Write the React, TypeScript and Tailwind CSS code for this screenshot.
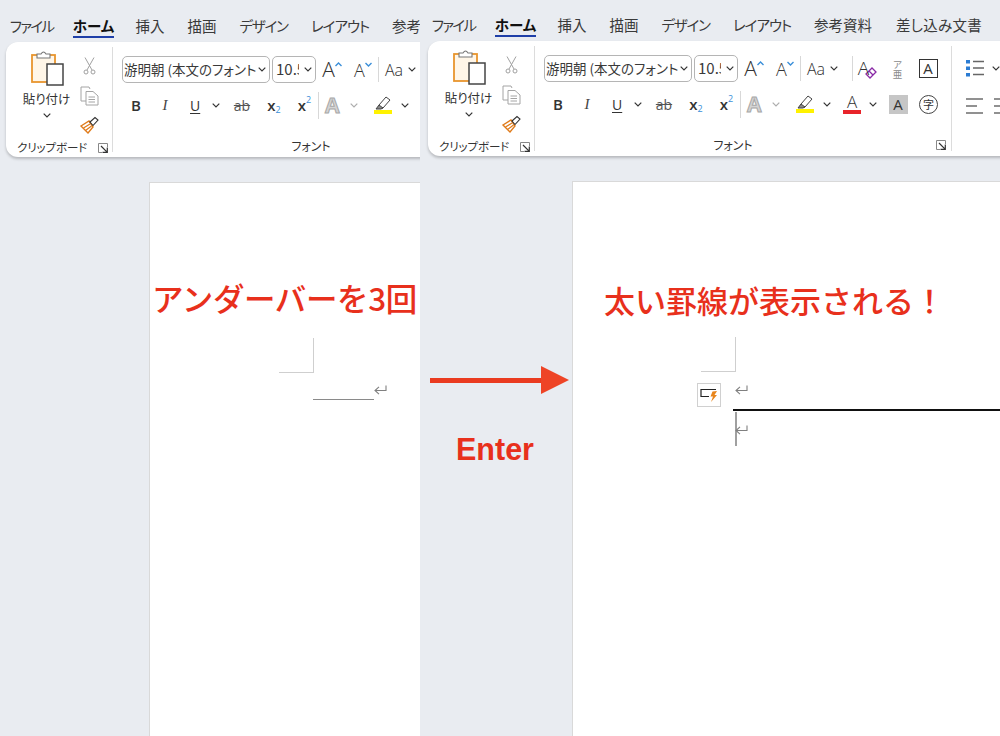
import React from "react";

const Chevron = ({ className = "" }: { className?: string }) => (
  <svg width="8" height="5" viewBox="0 0 8 5" className={`shrink-0 ${className}`} fill="none" stroke="#333" strokeWidth="1.2">
    <path d="M0.7 0.7 L4 4 L7.3 0.7" />
  </svg>
);

const Launcher = () => (
  <svg width="10" height="10" viewBox="0 0 10 10" fill="none" stroke="#333" strokeWidth="1">
    <path d="M9.5 4 V0.5 H0.5 V9.5 H4" stroke="#888" />
    <path d="M3 3 L8.6 8.6 M9.3 4.5 V9.3 H4.5" strokeWidth="1.2" />
  </svg>
);

const Paste = () => (
  <svg width="34" height="36" viewBox="0 0 34 36" fill="none">
    <rect x="1" y="5" width="23" height="27" fill="#fff6e8" stroke="#e8952e" strokeWidth="1.8" />
    <path d="M6 8 V4 H10 Q12.5 0 15 4 H19 V8 Z" fill="#fff" stroke="#777" strokeWidth="1.1" />
    <rect x="16" y="14" width="16" height="21" fill="#fff" stroke="#444" strokeWidth="1.5" />
  </svg>
);

const Scissors = () => (
  <svg width="13" height="18" viewBox="0 0 13 18" fill="none" stroke="#a0a0a0" strokeWidth="1">
    <path d="M2 0.5 L9 13 M11 0.5 L4 13" />
    <circle cx="3" cy="15" r="2" />
    <circle cx="10" cy="15" r="2" />
  </svg>
);

const Copy = () => (
  <svg width="19" height="20" viewBox="0 0 19 20" fill="none" stroke="#a4a4a4" strokeWidth="1">
    <path d="M9 15 H1 V1 H9 L10 3" />
    <path d="M6 5.5 H13 L18 10 V19 H6 Z" fill="#fff" />
    <path d="M8.5 11 H15 M8.5 13.5 H15 M8.5 16 H15" />
  </svg>
);

const Painter = () => (
  <svg width="19" height="18" viewBox="0 0 19 18" fill="none">
    <path d="M1 10 L9 5 L13 11 L8 17 Z" fill="#fff" stroke="#e07b1a" strokeWidth="1.4" />
    <path d="M3.5 12 L10 8 M5.5 14.5 L11.5 10" stroke="#e07b1a" strokeWidth="1.2" />
    <path d="M10 6 L15 1.5 L18 4 L13 9.5 Z" fill="#fff" stroke="#333" strokeWidth="1.1" />
  </svg>
);

const Caret = ({ down = false }: { down?: boolean }) => (
  <svg width="7" height="5" viewBox="0 0 7 5" fill="none" stroke="#3b8fd9" strokeWidth="1.4">
    <path d={down ? "M0.5 1 L3.5 4 L6.5 1" : "M0.5 4 L3.5 1 L6.5 4"} />
  </svg>
);

const Eraser = () => (
  <svg width="12" height="12" viewBox="0 0 12 12" fill="none" stroke="#8a2aa6" strokeWidth="1.3">
    <path d="M1 7 L7 1 L11 5 L5 11 Z" />
    <path d="M4 4 L8 8" />
  </svg>
);

const Pen = () => (
  <svg width="17" height="14" viewBox="0 0 17 14" fill="none" stroke="#444" strokeWidth="1">
    <path d="M4 9 L11 1 L15 4 L8 12 H4 Z" fill="#fff" />
    <path d="M1 13 L4 9 L8 12 L6 13 Z" fill="#888" />
  </svg>
);

const ListIcon = () => (
  <svg width="18" height="18" viewBox="0 0 18 18">
    <rect x="0" y="1" width="4" height="3.5" fill="#2b7cd3" />
    <rect x="0" y="7.5" width="4" height="3.5" fill="#2b7cd3" />
    <rect x="0" y="14" width="4" height="3.5" fill="#2b7cd3" />
    <path d="M7 2.5 H18 M7 9 H18 M7 15.5 H18" stroke="#666" strokeWidth="1.3" />
  </svg>
);

const AlignIcon = () => (
  <svg width="18" height="16" viewBox="0 0 18 16" stroke="#6e6e6e" strokeWidth="1.3">
    <path d="M0 1 H17 M0 8 H11 M0 15 H17" />
  </svg>
);

const ReturnMark = () => (
  <svg width="13" height="11" viewBox="0 0 13 11" fill="none" stroke="#808080" strokeWidth="1.1">
    <path d="M12 0.5 V5.5 H1 M5 1.8 L1 5.5 L5 9.2" />
  </svg>
);

const AutoFormat = () => (
  <svg width="19" height="15" viewBox="0 0 19 15" fill="none">
    <path d="M16 1.5 H1 V8.5 H9" stroke="#222" strokeWidth="1.2" />
    <path d="M17 3 L12.5 3.5 L10.5 8.5 H13 L11 14 L17 7 H14.5 Z" fill="#e8851c" />
  </svg>
);

const Cell = ({ className = "", children }: { className?: string; children: React.ReactNode }) => (
  <div className={`flex items-center shrink-0 h-full ${className}`}>{children}</div>
);

const Select = ({ className, textClass, label }: { className: string; textClass: string; label: string }) => (
  <div className={`flex items-center h-[27px] shrink-0 border border-[#b5b5b5] rounded-[5px] bg-white pl-px pr-[3px] gap-[1px] ${className}`}>
    <span className={`flex-1 min-w-0 overflow-hidden whitespace-nowrap text-[#3a3a3a] [font-feature-settings:'palt'] ${textClass}`}>{label}</span>
    <Chevron />
  </div>
);

const UiA = "font-['Open_Sans',sans-serif] text-[#333]";

const Ribbon = () => (
  <div className="flex h-[115px] w-[1000px] bg-white rounded-l-[12px] shadow-[0_2px_3px_rgba(0,0,0,0.22)] shrink-0">
    {/* clipboard */}
    <div className="flex flex-col w-[106px] shrink-0">
      <div className="flex flex-1 pl-[12px] pt-[9px]">
        <div className="flex flex-col items-center w-[57px]">
          <span className="ml-[3px] -mt-px"><Paste /></span>
          <span className="mt-[4px] text-[12.5px] leading-[18px] text-[#333] whitespace-nowrap [font-feature-settings:'palt']">貼り付け</span>
          <Chevron className="mt-[5px]" />
        </div>
        <div className="flex flex-col items-center w-[28px]">
          <div className="h-[30px] flex items-center"><Scissors /></div>
          <div className="h-[30px] flex items-center"><Copy /></div>
          <div className="h-[28px] flex items-center"><Painter /></div>
        </div>
      </div>
      <div className="flex items-center h-[22px] mb-[2px] pl-[11px]">
        <span className="w-[81px] text-[11.5px] text-[#333] whitespace-nowrap tracking-[-0.1px] [font-feature-settings:'palt']">クリップボード</span>
        <Launcher />
      </div>
    </div>
    <div className="w-px bg-[#dcdcdc] my-[5px] shrink-0" />
    {/* font */}
    <div className="flex flex-col w-[416px] shrink-0">
      <div className="flex-1 pl-[9px] pt-[14px]">
        <div className="flex h-[27px] items-center">
          <Select className="w-[148px]" textClass="text-[13.5px]" label="游明朝 (本文のフォント" />
          <Select className="w-[44px] ml-[2px]" textClass="text-[15px] pl-[2px] mr-[4px]" label="10.5" />
          <Cell className="w-[32px] justify-center">
            <span className={`${UiA} text-[21px] font-light leading-none`}>A</span>
            <span className="mb-[10px]"><Caret /></span>
          </Cell>
          <Cell className="w-[30px] justify-center">
            <span className={`${UiA} text-[18px] font-light leading-none`}>A</span>
            <span className="mb-[10px]"><Caret down /></span>
          </Cell>
          <div className="w-px h-[25px] bg-[#d8d8d8] shrink-0" />
          <Cell className="w-[51px] gap-[5px] pl-[6px]">
            <span className={`${UiA} text-[16px] font-light leading-none`}>Aa</span>
            <Chevron />
          </Cell>
          <div className="w-px h-[25px] bg-[#d8d8d8] shrink-0" />
          <Cell className="w-[29px] justify-center">
            <span className={`${UiA} relative text-[19px] font-light leading-none`}>A</span>
            <span className="mt-[9px] -ml-[4px]"><Eraser /></span>
          </Cell>
          <Cell className="w-[31px] flex-col justify-center">
            <span className="text-[9.5px] leading-[10px] text-[#8a8a8a]">ア</span>
            <span className="text-[9.5px] leading-[10px] text-[#8a8a8a]">亜</span>
          </Cell>
          <Cell className="w-[30px] justify-center">
            <span className={`${UiA} flex items-center justify-center w-[19px] h-[19px] border-[1.5px] border-[#333] text-[15px] leading-none`}>A</span>
          </Cell>
        </div>
        <div className="flex h-[28px] items-center mt-[8px]">
          <Cell className="w-[28px] justify-center"><span className={`${UiA} font-semibold text-[15px]`}>B</span></Cell>
          <Cell className="w-[30px] justify-center"><span className="font-['Liberation_Serif',serif] italic text-[15px] text-[#444]">I</span></Cell>
          <Cell className="w-[48px] gap-[12px] pl-[10px]">
            <span className={`${UiA} text-[14px] underline underline-offset-2`}>U</span>
            <Chevron />
          </Cell>
          <Cell className="w-[30px] justify-center"><span className={`${UiA} text-[14px] line-through text-[#555] -ml-[2px]`}>ab</span></Cell>
          <Cell className="w-[30px] justify-center pl-[2px]">
            <span className={`${UiA} font-semibold text-[15px] leading-none`}>x</span>
            <span className="font-['Open_Sans',sans-serif] text-[9px] text-[#3b8fd9] mt-[10px]">2</span>
          </Cell>
          <Cell className="w-[30px] justify-center pl-[3px]">
            <span className={`${UiA} font-semibold text-[15px] leading-none`}>x</span>
            <span className="font-['Open_Sans',sans-serif] text-[9px] text-[#3b8fd9] mb-[10px]">2</span>
          </Cell>
          <div className="w-px h-[27px] bg-[#d8d8d8] shrink-0" />
          <Cell className="w-[49px] gap-[10px] pl-[6px]">
            <span className="font-['Open_Sans',sans-serif] font-bold text-[21px] leading-none text-[#d4d4d4] [-webkit-text-stroke:1px_#a8a8a8]">A</span>
            <Chevron className="opacity-40" />
          </Cell>
          <Cell className="w-[49px] gap-[9px] pl-[6px]">
            <span className="flex flex-col items-center w-[18px]">
              <Pen />
              <span className="w-[18px] h-[4px] bg-[#fff200]" />
            </span>
            <Chevron />
          </Cell>
          <Cell className="w-[44px] gap-[8px] pl-[4px]">
            <span className="flex flex-col items-center w-[18px]">
              <span className={`${UiA} text-[17px] font-light leading-[15px]`}>A</span>
              <span className="w-[18px] h-[4px] bg-[#e8242a] mt-[1px]" />
            </span>
            <Chevron />
          </Cell>
          <Cell className="w-[30px] justify-center">
            <span className={`${UiA} flex items-center justify-center w-[19px] h-[19px] bg-[#c6c6c6] text-[15px] leading-none`}>A</span>
          </Cell>
          <Cell className="w-[31px] justify-center">
            <span className="flex items-center justify-center w-[19px] h-[19px] rounded-full border border-[#444] text-[11px] leading-none text-[#333]">字</span>
          </Cell>
        </div>
      </div>
      <div className="flex items-center h-[22px]">
        <span className="flex-1 text-center text-[12px] text-[#333] [font-feature-settings:'palt']">フォント</span>
        <span className="w-[20px] flex items-center justify-end pr-[5px] shrink-0 -mt-px"><Launcher /></span>
      </div>
    </div>
    <div className="w-px bg-[#dcdcdc] my-[5px] shrink-0" />
    {/* paragraph */}
    <div className="flex flex-col pl-[14px] pt-[18px] gap-[21px]">
      <div className="flex items-center gap-[8px]"><ListIcon /><Chevron /></div>
      <div className="flex items-center gap-[10px]"><AlignIcon /><AlignIcon /></div>
    </div>
  </div>
);

const tabs: [string, string, string][] = [
  ["ファイル", "w-[43px]", "tracking-[-1.7px]"],
  ["ホーム", "w-[41px] ml-[20px]", ""],
  ["挿入", "w-[30px] ml-[21px]", ""],
  ["描画", "w-[30px] ml-[22px]", ""],
  ["デザイン", "w-[49px] ml-[22px]", "tracking-[-1.2px]"],
  ["レイアウト", "w-[58px] ml-[23px]", "tracking-[-1px]"],
  ["参考資料", "w-[60px] ml-[22px]", ""],
  ["差し込み文書", "w-[86px] ml-[23px]", "tracking-[0.3px]"],
];

const Tabs = () => (
  <div className="flex items-start h-[41px] w-[1000px] shrink-0 pl-[4px]">
    {tabs.map(([t, c, track]) => {
      const active = t === "ホーム";
      return (
        <div key={t} className={`shrink-0 flex flex-col items-center mt-[15px] ${c}`}>
          <span className={`text-[14.5px] leading-[19px] whitespace-nowrap [font-feature-settings:'palt'] ${track} ${active ? "font-bold text-[#111]" : "text-[#3a3a3a]"}`}>{t}</span>
          {active && <span className="w-full h-[2px] bg-[#1f3fa8] mt-[1px]" />}
        </div>
      );
    })}
  </div>
);

export default function App() {
  return (
    <div className="relative flex w-[1000px] h-[736px] overflow-hidden bg-[#e9ecf1] font-['Noto_Sans_CJK_JP',sans-serif]">
      {/* left */}
      <section className="relative flex flex-col w-[420px] shrink-0 overflow-hidden pt-px pl-[6px]">
        <Tabs />
        <Ribbon />
        <div className="flex-1 ml-[143px] mt-[25px] w-[700px] bg-white border-l border-t border-[#d9d9d9]">
          <div className="ml-[129px] mt-[155px] w-[35px] h-[35px] border-r border-b border-[#cfcfcf]" />
          <div className="flex items-end ml-[163px] mt-[12px]">
            <span className="block w-[61px] border-b border-[#8a8a8a]" />
            <span className="mb-[4px]"><ReturnMark /></span>
          </div>
        </div>
        <h2 className="absolute left-[152px] top-[276px] text-[31.5px] leading-[42px] font-medium text-[#e8301c] whitespace-nowrap tracking-[-0.4px]">アンダーバーを3回</h2>
      </section>

      {/* right */}
      <section className="relative flex flex-col flex-1 overflow-hidden pl-[8px]">
        <Tabs />
        <Ribbon />
        <div className="relative flex-1 ml-[144px] mt-[25px] w-[700px] bg-white border-l border-t border-[#d9d9d9]">
          <div className="ml-[128px] mt-[155px] w-[35px] h-[35px] border-r border-b border-[#cfcfcf]" />
          <div className="ml-[162px] mt-[13px] h-[11px]"><ReturnMark /></div>
          <div className="ml-[160px] mt-[13px] w-[300px] h-[2px] bg-[#111]" />
          <div className="flex ml-[162px] h-[34px] mt-[1px]">
            <span className="w-[2px] h-full bg-[#a0a0a0] shrink-0" />
            <span className="mt-[13px] -ml-[2px]"><ReturnMark /></span>
          </div>
          <div className="absolute left-[124px] top-[201px] flex items-center justify-center w-[24px] h-[24px] border border-[#d0d0d0] bg-white">
            <AutoFormat />
          </div>
        </div>
        <h2 className="absolute left-[184px] top-[279px] text-[31px] leading-[42px] font-medium text-[#e8301c] whitespace-nowrap">太い罫線が表示される！</h2>
      </section>

      {/* annotation between the two */}
      <svg className="absolute left-[430px] top-[365px]" width="140" height="30" viewBox="0 0 140 30">
        <rect x="0" y="13" width="112" height="5" fill="#ea3b20" />
        <path d="M111 1 L139 15 L111 29 Z" fill="#ee4426" />
      </svg>
      <span className="absolute left-[456px] top-[431px] font-['Liberation_Sans',sans-serif] font-bold text-[30.5px] leading-[36px] text-[#e8301c]">Enter</span>
    </div>
  );
}
